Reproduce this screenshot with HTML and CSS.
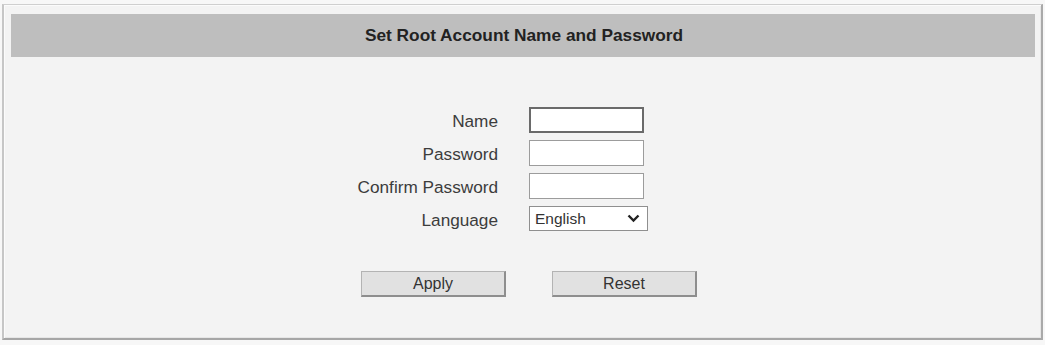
FILE: index.html
```html
<!DOCTYPE html>
<html>
<head>
<meta charset="utf-8">
<link rel="stylesheet" href="styles.css">
</head>
<body>
<div class="panel">
  <div class="header">Set Root Account Name and Password</div>
  <form class="form">
    <div class="grid">
      <label class="label" for="n">Name</label>
      <input class="field field-focus" id="n" type="text">
      <label class="label" for="p">Password</label>
      <input class="field" id="p" type="password">
      <label class="label" for="c">Confirm Password</label>
      <input class="field" id="c" type="password">
      <label class="label" for="l">Language</label>
      <div class="select-wrap">
        <select class="select" id="l"><option>English</option></select>
        <svg class="chev" width="13" height="9" viewBox="0 0 13 9"><path d="M1.5 1.5 L6.5 6.5 L11.5 1.5" fill="none" stroke="#222" stroke-width="2.4"/></svg>
      </div>
    </div>
    <div class="buttons">
      <button type="button" class="btn">Apply</button>
      <button type="button" class="btn">Reset</button>
    </div>
  </form>
</div>
</body>
</html>
```

FILE: styles.css
```css
html, body {
  margin: 0;
  padding: 0;
  background: #f7f7f7;
}
body {
  padding: 4px 2px 1px 2px;
  font-family: "Liberation Sans", Arial, sans-serif;
}
.panel {
  height: 336px;
  box-sizing: border-box;
  background: #f3f3f3;
  border-top: 1px solid #cfcfcf;
  border-left: 2px solid #c6c6c6;
  border-right: 2px solid #a9a9a9;
  border-bottom: 2px solid #a6a6a6;
  box-shadow: inset 1px 1px 0 #fbfbfb, inset -1px -1px 0 #e6e6e6;
  padding: 9px 6px 0 7px;
}
.header {
  height: 43px;
  background: #bebebe;
  color: #222;
  font-weight: bold;
  font-size: 17.3px;
  display: flex;
  align-items: center;
  justify-content: center;
  padding-left: 2px;
}
.form {
  margin: 0;
  padding-top: 50px;
}
.grid {
  display: grid;
  grid-template-columns: 487px auto;
  column-gap: 31px;
  row-gap: 7px;
  align-items: center;
}
.label {
  text-align: right;
  font-size: 17.2px;
  color: #3c3c3c;
  padding-top: 3px;
}
.field {
  width: 115px;
  height: 26px;
  box-sizing: border-box;
  border: 1px solid #9c9c9c;
  background: #fff;
  margin: 0;
  padding: 2px 4px;
  font-family: inherit;
}
.field-focus {
  border: 2px solid #6a6a6a;
}
.select-wrap {
  position: relative;
  width: 119px;
  height: 25px;
}
.select {
  appearance: none;
  -webkit-appearance: none;
  width: 119px;
  height: 25px;
  box-sizing: border-box;
  border: 1px solid #8f8f8f;
  background: #fff;
  margin: 0;
  padding: 0 5px;
  font-family: inherit;
  font-size: 15.5px;
  color: #333;
}
.chev {
  position: absolute;
  right: 8px;
  top: 8px;
  pointer-events: none;
}
.buttons {
  display: flex;
  gap: 46px;
  padding-left: 350px;
  padding-top: 40px;
}
.btn {
  width: 145px;
  height: 26px;
  box-sizing: border-box;
  background: #e1e1e1;
  border-top: 1px solid #b3b3b3;
  border-left: 1px solid #b3b3b3;
  border-right: 2px solid #8e8e8e;
  border-bottom: 2px solid #8e8e8e;
  font-family: inherit;
  font-size: 16px;
  color: #333;
  padding: 0;
  margin: 0;
}
```
